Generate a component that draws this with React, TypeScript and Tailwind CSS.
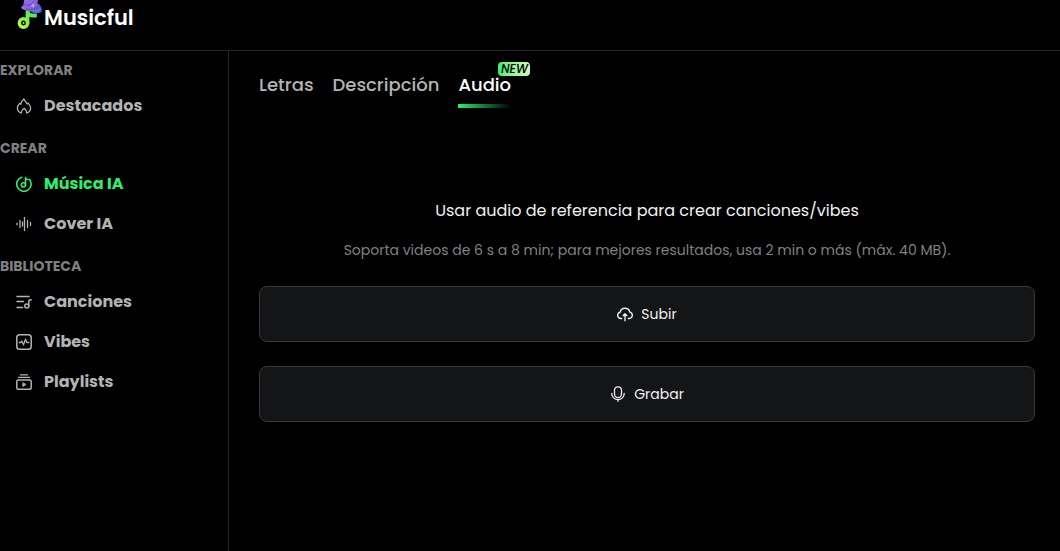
import type { ReactNode } from 'react';

interface NavItem {
  label: string;
  icon: ReactNode;
  active?: boolean;
}

interface NavGroup {
  title: string;
  items: NavItem[];
}

interface IconProps {
  children: ReactNode;
}

function Icon({ children }: IconProps) {
  return (
    <svg
      className="h-4 w-4 shrink-0"
      viewBox="0 0 16 16"
      fill="none"
      stroke="currentColor"
      strokeWidth="1.5"
      strokeLinecap="round"
      strokeLinejoin="round"
      aria-hidden="true"
    >
      {children}
    </svg>
  );
}

const FlameIcon = () => (
  <Icon>
    <path
      d="M5.300 15C2.800 14.200 1.400 12.300 1.400 10c0-2 1-3.300 2.200-4.700l1.200 1C5 4.200 6.300 2.200 7.900.9c.8 1.900 2 3.300 3.400 5l.9-.8c1.400 1.500 2.400 3 2.400 4.900 0 2.400-1.400 4.200-3.900 5 .2-1.900-.8-3.200-2.500-4.700-2 1.600-3.100 2.900-2.900 4.700z"
      strokeWidth="1.300"
    />
  </Icon>
);

const MusicDiscIcon = () => (
  <Icon>
    <path d="M5.800 1.200a7.200 7.200 0 1 0 7.600 2.200" strokeWidth="1.600" />
    <circle cx="7.400" cy="8.800" r="2.100" strokeWidth="1.600" />
    <path d="M9.500 8.800V1.500c.2 1.300 1 2 2.300 2.100" strokeWidth="1.600" />
  </Icon>
);

const WaveIcon = () => (
  <Icon>
    <path d="M1 7.200v1.600M4 4.500v7M6.500 6v4M8.500 1.500v13M11.500 4.500v7M14.500 6.500v3" strokeWidth="1.300" />
  </Icon>
);

const SongsIcon = () => (
  <Icon>
    <path d="M1 2.500h12M1 7.500h6.500M1 13.500h5.500" />
    <circle cx="10.800" cy="12" r="2" />
    <path d="M12.800 12V7.500c0-1.100.8-1.700 2.400-1.700" />
  </Icon>
);

const VibesIcon = () => (
  <Icon>
    <rect x=".8" y=".8" width="14.400" height="14.400" rx="2.800" />
    <path d="M3.300 8.500h1.500l1-1.500 1.700 3.800 2-5.600 1.400 3.300h1.800" strokeWidth="1.300" />
  </Icon>
);

const PlaylistsIcon = () => (
  <Icon>
    <path d="M4.500.8h7M2.500 3.400h11" strokeWidth="1.300" />
    <rect x=".8" y="6" width="14.400" height="9.300" rx="1.500" />
    <path d="M6.800 8.900v3.600l3-1.800z" fill="currentColor" strokeWidth=".8" />
  </Icon>
);

const UploadIcon = () => (
  <Icon>
    <path d="M4.700 12.500H4A3.200 3.200 0 0 1 3.100 6.200 5 5 0 0 1 12.800 6a3.300 3.300 0 0 1-.6 6.500h-.9" strokeWidth="1.400" />
    <path d="M8 14.800V8.500M6.200 9.500 8 7.700l1.800 1.800z" strokeWidth="1.300" />
  </Icon>
);

const MicIcon = () => (
  <Icon>
    <rect x="4.500" y=".8" width="7" height="10.800" rx="3.500" strokeWidth="1.300" />
    <path d="M1.800 7.500a6.200 6.200 0 0 0 12.400 0M8 13.700v1.600" strokeWidth="1.300" />
  </Icon>
);

const Logo = () => (
  <svg className="h-8 w-7 shrink-0" viewBox="0 0 28 32" fill="none" aria-hidden="true">
    <defs>
      <linearGradient id="note" x1="19" y1="11" x2="4" y2="29" gradientUnits="userSpaceOnUse">
        <stop stopColor="#36e878" />
        <stop offset=".5" stopColor="#80ee50" />
        <stop offset="1" stopColor="#c4fa38" />
      </linearGradient>
      <linearGradient id="hat" x1="5" y1="0" x2="26" y2="12" gradientUnits="userSpaceOnUse">
        <stop stopColor="#a36be0" />
        <stop offset=".6" stopColor="#8066df" />
        <stop offset="1" stopColor="#4a49c0" />
      </linearGradient>
    </defs>
    <circle cx="7.500" cy="23" r="4.200" stroke="url(#note)" strokeWidth="3.400" />
    <circle cx="7.500" cy="23" r="1" fill="#b5f53c" />
    <path d="M11.500 23.500V10.500c.3 3.400 2.500 5 5 5h4.300" stroke="url(#note)" strokeWidth="3.800" />
    <path d="M8 0h14l-.5 3.500c3 1.400 4.800 4.500 4.200 8.500-3.500 2-8.500 1.200-11.500-.8C10.500 10.500 6 10 5 7.500c.4-1.200 2.400-1.500 2.500-3z" fill="url(#hat)" />
    <path d="M8 4c3 2.500 7 1.500 9.500-2.500M10 8.500c4 2 9.500 1 12-3" stroke="#5f45b8" strokeWidth="1" />
    <path d="m15 5.500 2-2 2 2-2 2z" fill="#d99aa8" />
    <path d="M19 11c2.500.5 4.500-.5 5.500-2.500" stroke="#5f87ee" strokeWidth="1.200" />
  </svg>
);

const groups: NavGroup[] = [
  {
    title: 'EXPLORAR',
    items: [{ label: 'Destacados', icon: <FlameIcon /> }],
  },
  {
    title: 'CREAR',
    items: [
      { label: 'Música IA', icon: <MusicDiscIcon />, active: true },
      { label: 'Cover IA', icon: <WaveIcon /> },
    ],
  },
  {
    title: 'BIBLIOTECA',
    items: [
      { label: 'Canciones', icon: <SongsIcon /> },
      { label: 'Vibes', icon: <VibesIcon /> },
      { label: 'Playlists', icon: <PlaylistsIcon /> },
    ],
  },
];

function Sidebar() {
  return (
    <nav className="flex w-[229px] shrink-0 flex-col gap-3 border-r border-[#25262b] pt-[9px]">
      {groups.map((group) => (
        <section key={group.title}>
          <h2 className="mb-1.5 text-sm leading-5 font-bold text-[#808080]">{group.title}</h2>
          {group.items.map((item) => (
            <a
              key={item.label}
              href="#"
              className={`flex h-10 items-center gap-3 pl-4 text-base font-bold ${
                item.active ? 'text-[#2af070]' : 'text-[#b3b3b3]'
              }`}
            >
              {item.icon}
              {item.label}
            </a>
          ))}
        </section>
      ))}
    </nav>
  );
}

function Tabs() {
  return (
    <div role="tablist" className="flex gap-[19px] text-lg leading-7 font-medium text-[#b3b3b3]">
      <button role="tab" aria-selected="false" className="pb-2">Letras</button>
      <button role="tab" aria-selected="false" className="pb-2">Descripción</button>
      <button role="tab" aria-selected="true" className="relative pb-2 text-white">
        Audio
        <span className="absolute -top-[9px] left-10 flex h-3.5 w-8 items-center justify-center rounded bg-linear-to-r from-[#2af070] to-[#d3f9bd] text-xs leading-3 font-medium text-black italic">
          NEW
        </span>
        <span className="absolute inset-x-0 -bottom-px h-1 bg-linear-to-r from-[#2af070] to-transparent" />
      </button>
    </div>
  );
}

interface ActionButtonProps {
  icon: ReactNode;
  label: string;
}

function ActionButton({ icon, label }: ActionButtonProps) {
  return (
    <button className="flex h-14 w-full items-center justify-center gap-2 rounded-lg border border-[#38393c] bg-[#141517] text-sm text-[#f0f0f0] hover:bg-[#1c1d20]">
      {icon}
      {label}
    </button>
  );
}

export default function App() {
  return (
    <div className="flex min-h-screen flex-col bg-black font-['Poppins','Inter',sans-serif]">
      <header className="flex h-[51px] items-start border-b border-[#25262b] pl-4">
        <a href="#" className="flex items-start text-white">
          <Logo />
          <span className="pt-1 text-[21px] leading-7 font-semibold">Musicful</span>
        </a>
      </header>

      <div className="flex flex-1">
        <Sidebar />
        <main className="min-w-0 flex-1 pt-5 pr-[25px] pl-[30px]">
          <Tabs />
          <div className="mt-[92px] text-center">
            <h1 className="text-base leading-6 text-[#f0f0f0]">
              Usar audio de referencia para crear canciones/vibes
            </h1>
            <p className="mt-[15px] text-sm leading-6 text-[#808080]">
              Soporta videos de 6 s a 8 min; para mejores resultados, usa 2 min o más (máx. 40 MB).
            </p>
          </div>
          <div className="mt-6 flex flex-col gap-6">
            <ActionButton icon={<UploadIcon />} label="Subir" />
            <ActionButton icon={<MicIcon />} label="Grabar" />
          </div>
        </main>
      </div>
    </div>
  );
}
